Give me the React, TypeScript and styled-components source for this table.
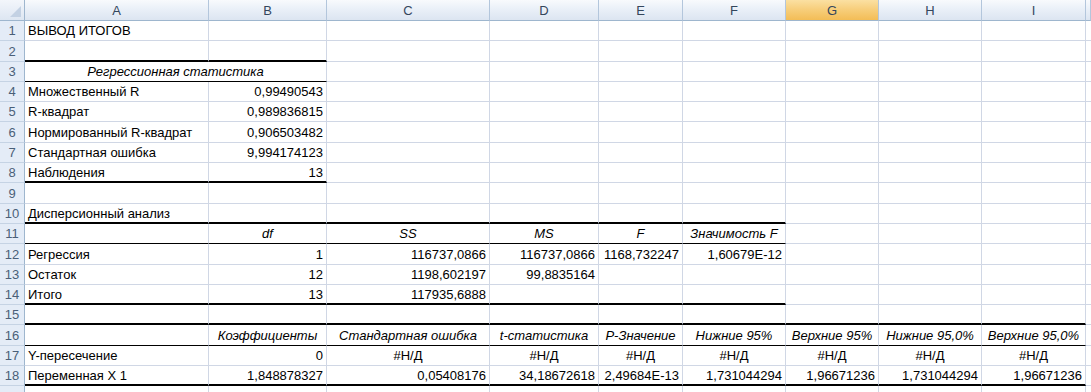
import React from 'react';
import styled, { createGlobalStyle, css } from 'styled-components';

const GlobalStyle = createGlobalStyle`
  html, body {
    margin: 0;
    padding: 0;
    background: white;
  }
  body {
    font-family: 'Liberation Sans', Arial, sans-serif;
    overflow: hidden;
  }
`;

const COLUMNS = [25, 184, 118, 163, 109, 84, 103, 93, 103, 104, 5];
const LETTERS = ['A', 'B', 'C', 'D', 'E', 'F', 'G', 'H', 'I', ''];

const Sheet = styled.div`
  display: grid;
  grid-template-columns: ${COLUMNS.map((w) => `${w}px`).join(' ')};
  grid-template-rows: 21px;
  grid-auto-rows: 20.3px;
  width: 1091px;
  height: 392px;
  overflow: hidden;
  font-size: 13px;
  color: #000;
`;

const Corner = styled.div`
  position: relative;
  box-sizing: border-box;
  background: linear-gradient(#f3f6fb, #dde6f2);
  border-right: 1px solid #9eb6ce;
  border-bottom: 1px solid #9eb6ce;

  &::after {
    content: '';
    position: absolute;
    right: 3px;
    bottom: 3px;
    border-left: 11px solid transparent;
    border-bottom: 11px solid #c3d1e3;
  }
`;

const ColHeader = styled.div<{ $active?: boolean }>`
  box-sizing: border-box;
  display: flex;
  align-items: center;
  justify-content: center;
  border-right: 1px solid #b3c6dc;
  border-bottom: 1px solid #9eb6ce;
  color: #34465c;
  font-size: 13px;
  background: ${({ $active }) =>
    $active
      ? 'linear-gradient(#fbe0a2, #f7cf7d 45%, #f3bd56)'
      : 'linear-gradient(#f8fafd, #eaf0f8 45%, #dce5f1)'};
`;

const RowHeader = styled.div`
  box-sizing: border-box;
  display: flex;
  align-items: flex-end;
  justify-content: center;
  padding-bottom: 2px;
  background: #e4ecf7;
  border-right: 1px solid #9eb6ce;
  border-bottom: 1px solid #c5d3e4;
  color: #4a5f78;
  font-size: 13px;
`;

type Edge = 'thick' | 'thin' | undefined;

const Cell = styled.div<{
  $align?: 'left' | 'right' | 'center';
  $italic?: boolean;
  $span?: number;
  $bottom?: Edge;
}>`
  box-sizing: border-box;
  display: flex;
  align-items: flex-end;
  justify-content: ${({ $align }) =>
    $align === 'right' ? 'flex-end' : $align === 'center' ? 'center' : 'flex-start'};
  padding: 0 3px 2px 3px;
  white-space: nowrap;
  overflow: visible;
  border-right: 1px solid #d0d7e5;
  border-bottom: 1px solid #d0d7e5;
  font-style: ${({ $italic }) => ($italic ? 'italic' : 'normal')};
  ${({ $span }) => $span && css`grid-column: span ${$span};`}
  ${({ $bottom }) =>
    $bottom === 'thick'
      ? css`border-bottom: 2px solid #000; padding-bottom: 1px;`
      : $bottom === 'thin'
      ? css`border-bottom: 1px solid #000;`
      : ''}
`;

type CellData = {
  text?: string;
  align?: 'left' | 'right' | 'center';
  italic?: boolean;
  span?: number;
};

const L = (text: string): CellData => ({ text, align: 'left' });
const R = (text: string): CellData => ({ text, align: 'right' });
const C = (text: string): CellData => ({ text, align: 'center' });
const I = (text: string): CellData => ({ text, align: 'center', italic: true });
const E: CellData = {};

const ND = C('#Н/Д');

// hidden: the last row is cut by the window, its number is not visible
type RowData = { cells: CellData[]; bottom?: Edge; to?: number; hidden?: boolean };

const rows: RowData[] = [
  { cells: [L('ВЫВОД ИТОГОВ')] },
  { cells: [], bottom: 'thick', to: 2 },
  { cells: [{ text: 'Регрессионная статистика', align: 'center', italic: true, span: 2 }], bottom: 'thin', to: 2 },
  { cells: [L('Множественный R'), R('0,99490543')] },
  { cells: [L('R-квадрат'), R('0,989836815')] },
  { cells: [L('Нормированный R-квадрат'), R('0,906503482')] },
  { cells: [L('Стандартная ошибка'), R('9,994174123')] },
  { cells: [L('Наблюдения'), R('13')], bottom: 'thick', to: 2 },
  { cells: [] },
  { cells: [L('Дисперсионный анализ')], bottom: 'thick', to: 6 },
  { cells: [E, I('df'), I('SS'), I('MS'), I('F'), I('Значимость F')], bottom: 'thin', to: 6 },
  {
    cells: [L('Регрессия'), R('1'), R('116737,0866'), R('116737,0866'), R('1168,732247'), R('1,60679E-12')],
  },
  { cells: [L('Остаток'), R('12'), R('1198,602197'), R('99,8835164')] },
  { cells: [L('Итого'), R('13'), R('117935,6888')], bottom: 'thick', to: 6 },
  { cells: [], bottom: 'thick', to: 9 },
  {
    cells: [
      E,
      I('Коэффициенты'),
      I('Стандартная ошибка'),
      I('t-статистика'),
      I('P-Значение'),
      I('Нижние 95%'),
      I('Верхние 95%'),
      I('Нижние 95,0%'),
      I('Верхние 95,0%'),
    ],
    bottom: 'thin',
    to: 9,
  },
  { cells: [L('Y-пересечение'), R('0'), ND, ND, ND, ND, ND, ND, ND] },
  {
    cells: [
      L('Переменная X 1'),
      R('1,848878327'),
      R('0,05408176'),
      R('34,18672618'),
      R('2,49684E-13'),
      R('1,731044294'),
      R('1,96671236'),
      R('1,731044294'),
      R('1,96671236'),
    ],
    bottom: 'thick',
    to: 9,
  },
  { cells: [], hidden: true },
];

const SheetRow = ({ row, index }: { row: RowData; index: number }) => {
  const items: React.ReactNode[] = [];
  let col = 1;
  let i = 0;
  while (col <= 10) {
    const data = row.cells[i] ?? E;
    const span = data.span ?? 1;
    const edge = row.bottom && col <= (row.to ?? 0) ? row.bottom : undefined;
    items.push(
      <Cell
        key={col}
        $align={data.align}
        $italic={data.italic}
        $span={span > 1 ? span : undefined}
        $bottom={edge}
      >
        {data.text}
      </Cell>,
    );
    col += span;
    i += 1;
  }
  return (
    <>
      <RowHeader>{row.hidden ? null : index + 1}</RowHeader>
      {items}
    </>
  );
};

const App = () => (
  <>
    <GlobalStyle />
    <Sheet>
      <Corner />
      {LETTERS.map((letter, i) => (
        <ColHeader key={i} $active={letter === 'G'}>
          {letter}
        </ColHeader>
      ))}
      {rows.map((row, i) => (
        <SheetRow key={i} row={row} index={i} />
      ))}
    </Sheet>
  </>
);

export default App;
